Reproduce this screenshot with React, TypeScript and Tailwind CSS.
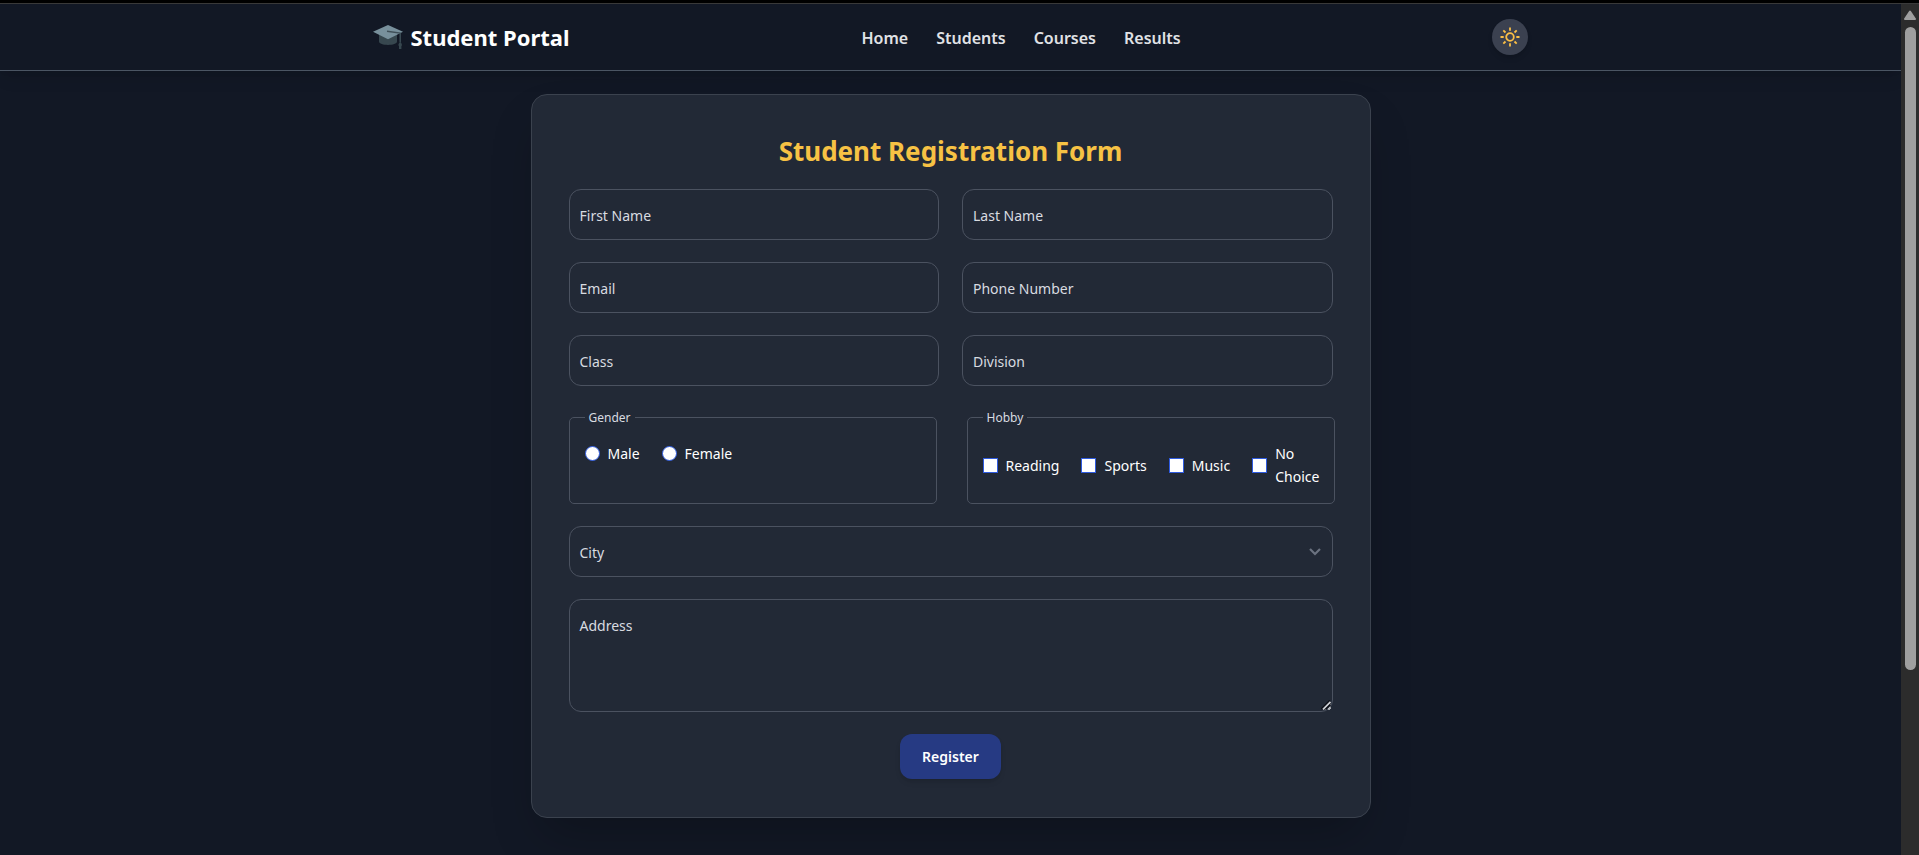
import type { ReactNode } from "react";

const links = ["Home", "Students", "Courses", "Results"];
const genders = ["Male", "Female"];
const hobbies = ["Reading", "Sports", "Music", "No Choice"];

const box =
  "block w-full rounded-[12px] border border-[#4b5260] bg-transparent px-[11px] text-[14px] leading-[23px] text-white outline-none focus:border-blue-500";

function CapIcon() {
  return (
    <svg viewBox="0 0 30 24" className="h-6 w-[30px] shrink-0" aria-hidden="true">
      <path d="M6 9v7.500c0 4.500 18 4.500 18 0V9z" fill="#37474f" />
      <path d="M15 0 0 6.700 15 14.200 30 6.700z" fill="#78909c" />
      <path d="M14 6.200 27.200 8v9" fill="none" stroke="#3f4f58" strokeWidth="1.400" />
      <path d="M27.200 16.500c-2 2.500-2.200 4.200-1.200 4.600V24h2.400v-2.900c1-.4.8-2.100-1.200-4.600z" fill="#37474f" />
    </svg>
  );
}

function SunIcon() {
  return (
    <svg viewBox="0 0 20 20" className="size-5" fill="none" stroke="#fbbf45" strokeWidth="1.800" aria-hidden="true">
      <circle cx="10" cy="10" r="3.800" />
      <path d="M10 .5v3.200M10 16.300v3.200M.5 10h3.200M16.300 10h3.200M3.300 3.300l2.200 2.200M14.500 14.500l2.200 2.200M3.300 16.700l2.200-2.200M14.500 5.500l2.200-2.200" />
    </svg>
  );
}

function Field({ id, label, wide, children }: { id: string; label: string; wide?: boolean; children: ReactNode }) {
  return (
    <div className={wide ? "relative col-span-2" : "relative"}>
      {children}
      <label
        htmlFor={id}
        className="pointer-events-none absolute left-[11px] top-4 text-[14px] leading-[22px] text-[#d8dbe0]"
      >
        {label}
      </label>
    </div>
  );
}

function TextField({ id, label, type = "text" }: { id: string; label: string; type?: string }) {
  return (
    <Field id={id} label={label}>
      <input id={id} type={type} className={`${box} h-[51px]`} />
    </Field>
  );
}

function Group({ legend, children }: { legend: string; children: ReactNode }) {
  return (
    <fieldset className="min-w-0 flex-1 rounded-[5px] border border-[#4b5260] px-[15px] pb-[15px] pt-4">
      <legend className="px-1 pt-[2px] text-[12px] leading-4 text-[#d8dbe0]">{legend}</legend>
      <div className="flex gap-[22px] text-[14px] leading-[23px] text-white">{children}</div>
    </fieldset>
  );
}

export default function App() {
  return (
    <div className="flex min-h-screen flex-col bg-[#111827] font-['Noto_Sans','Open_Sans',sans-serif]">
      <div className="h-1 border-b border-[#3a3a3a] bg-black" />
      <div className="flex flex-1">
        <div className="flex-1 bg-[#121825]">
          <header className="border-b border-[#4b5563] shadow-lg">
            <div className="mx-auto flex h-[66px] max-w-[1156px] items-center justify-between">
              <a href="#" className="flex items-center gap-2 text-[22px] font-bold text-white">
                <CapIcon />
                Student Portal
              </a>
              <nav className="mr-5 flex gap-[28px] pt-[2px] text-[16px] font-semibold text-[#e0e2e6]">
                {links.map((l) => (
                  <a key={l} href={`#${l.toLowerCase()}`}>
                    {l}
                  </a>
                ))}
              </nav>
              <button
                type="button"
                aria-label="Toggle theme"
                className="flex size-9 items-center justify-center rounded-full bg-[#3b4150] shadow-md"
              >
                <SunIcon />
              </button>
            </div>
          </header>

          <main className="mt-[23px] pb-9">
            <form
              onSubmit={(e) => e.preventDefault()}
              className="mx-auto max-w-[840px] rounded-[16px] border border-[#3b424e] bg-[#222936] px-[37px] pb-[38px] pt-[37px] shadow-2xl"
            >
              <h1 className="h-[57px] text-center text-[26px] font-bold leading-[38px] text-[#f7c244]">
                Student Registration Form
              </h1>
              <div className="grid grid-cols-2 gap-x-[23px] gap-y-[22px]">
                <TextField id="first" label="First Name" />
                <TextField id="last" label="Last Name" />
                <TextField id="email" label="Email" type="email" />
                <TextField id="phone" label="Phone Number" type="tel" />
                <TextField id="class" label="Class" />
                <TextField id="division" label="Division" />

                <div className="col-span-2 -mr-[2px] flex gap-[30px]">
                  <Group legend="Gender">
                    {genders.map((g) => (
                      <label key={g} className="flex items-center gap-2">
                        <input
                          type="radio"
                          name="gender"
                          className="size-[15px] shrink-0 appearance-none rounded-full border border-[#2f5be0] bg-white checked:border-4"
                        />
                        {g}
                      </label>
                    ))}
                  </Group>
                  <Group legend="Hobby">
                    {hobbies.map((h) => (
                      <label key={h} className="flex items-center gap-2">
                        <input
                          type="checkbox"
                          name="hobby"
                          className="size-[15px] shrink-0 appearance-none border border-[#2f5be0] bg-white checked:border-4"
                        />
                        {h}
                      </label>
                    ))}
                  </Group>
                </div>

                <Field id="city" label="City" wide>
                  <select id="city" className={`${box} h-[51px] appearance-none`} />
                  <svg
                    viewBox="0 0 12 8"
                    className="pointer-events-none absolute right-3 top-[22px] h-2 w-3"
                    fill="none"
                    stroke="#6b7280"
                    strokeWidth="2.200"
                    aria-hidden="true"
                  >
                    <path d="M1 1l5 5 5-5" />
                  </svg>
                </Field>
                <Field id="address" label="Address" wide>
                  <textarea id="address" className={`${box} h-[113px] resize pt-4`} />
                  <svg
                    viewBox="0 0 10 10"
                    className="pointer-events-none absolute bottom-[2px] right-[2px] size-[10px]"
                    fill="none"
                    aria-hidden="true"
                  >
                    <path d="M.5 9 9 .5" stroke="#0b0e16" strokeWidth="1.800" />
                    <path d="M2 9.500 9.500 2" stroke="#c9cbd1" strokeWidth="1.800" />
                    <path d="M4.500 9.500l5-5" stroke="#0b0e16" strokeWidth="1.200" />
                    <path d="M7 9.500 9.500 7" stroke="#c9cbd1" strokeWidth="1.500" />
                  </svg>
                </Field>
              </div>
              <button
                type="submit"
                className="mx-auto mt-[22px] block h-[45px] rounded-[12px] bg-[#263a83] px-[22px] text-[14px] font-semibold text-white shadow-md"
              >
                Register
              </button>
            </form>
          </main>
        </div>

        <div className="flex w-[18px] flex-col items-center bg-[#2c2c2c] pt-[6px]" aria-hidden="true">
          <svg viewBox="0 0 12 10" className="h-[10px] w-3" fill="#9f9f9f" stroke="#9f9f9f" strokeLinejoin="round" strokeWidth="2">
            <path d="M6 1.500 11 9H1z" />
          </svg>
          <div className="mt-[7px] w-[11px] flex-[776] rounded-full bg-[#9f9f9f]" />
          <div className="flex-[224]" />
        </div>
      </div>
    </div>
  );
}
